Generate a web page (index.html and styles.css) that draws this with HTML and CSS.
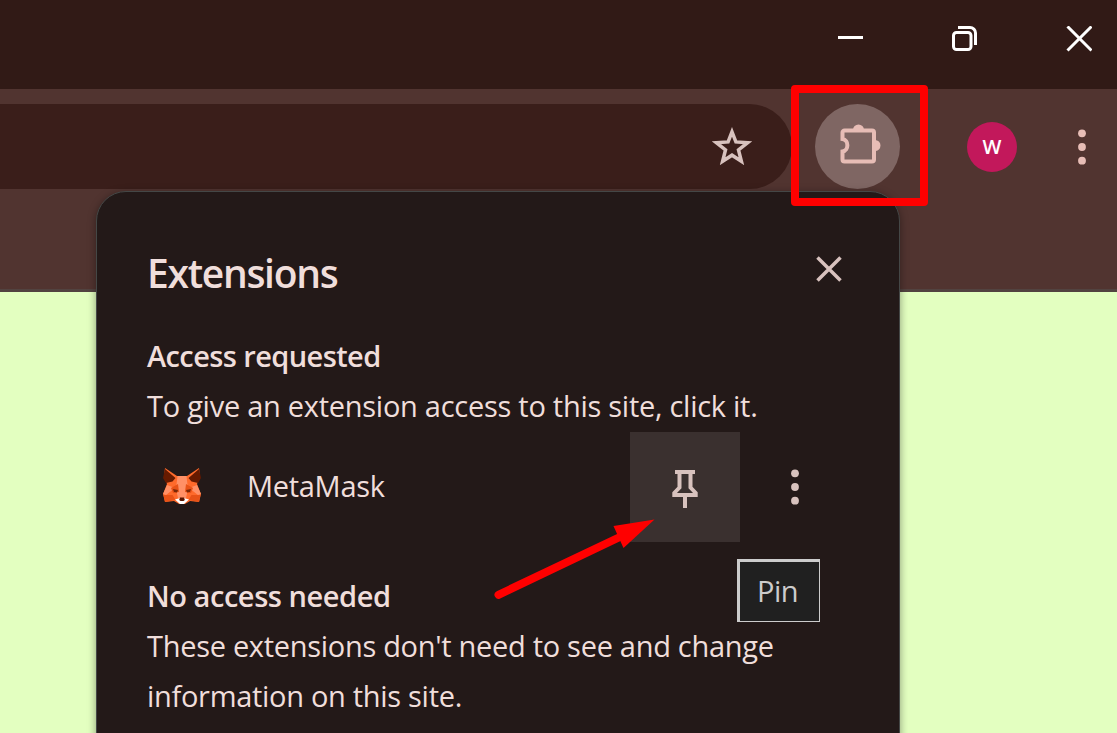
FILE: index.html
```html
<!DOCTYPE html>
<html lang="en">
<head>
<meta charset="utf-8">
<title>Extensions</title>
<link rel="stylesheet" href="styles.css">
</head>
<body>
<div class="browser">
  <header class="titlebar">
    <svg class="win-icon" viewBox="0 0 26 26"><path d="M0 11.500h25" stroke-width="3"/></svg>
    <svg class="win-icon" viewBox="0 0 26 26"><rect x="1.500" y="6.500" width="17.500" height="17" rx="3"/><path d="M6 1.500H18a5.500 5.500 0 0 1 5.500 5.500v12"/></svg>
    <svg class="win-icon" viewBox="0 0 26 26"><path d="M1.500 .500l24 24M25.500 .500L1.500 24.500"/></svg>
  </header>
  <div class="toolbar">
    <div class="omnibox">
      <svg class="star" viewBox="0 0 40 38"><path d="M20 4.800l3.900 10.100 11.800.8-9.200 7.200 2.900 11.400-9.400-6.100-9.400 6.100 2.900-11.400-9.200-7.200 11.800-.8z"/></svg>
    </div>
    <button class="puzzle" aria-label="Extensions">
      <svg viewBox="0 0 42 42"><path class="line" d="M4.500 7.500H32a2 2 0 0 1 2 2V36.500a2 2 0 0 1-2 2H4.500a2 2 0 0 1-2-2V28.500C9 27.500 9 17 2.500 16V9.500a2 2 0 0 1 2-2z"/><path class="knob" d="M13 7a5.500 5.500 0 0 1 11 0zM35 17a5.500 5.500 0 0 1 0 11z"/></svg>
    </button>
    <div class="avatar">W</div>
    <svg class="dots menu" viewBox="0 0 8 36"><circle cx="4" cy="4.300" r="3.900"/><circle cx="4" cy="18" r="3.900"/><circle cx="4" cy="31.700" r="3.900"/></svg>
  </div>
  <div class="bookmarks"></div>
  <main class="page"></main>
</div>

<section class="popup">
  <div class="popup-head">
    <h1>Extensions</h1>
    <svg class="close" viewBox="0 0 26 26"><path d="M1.500 1.500l23 23M24.500 1.500L1.500 24.500"/></svg>
  </div>
  <h2 class="requested">Access requested</h2>
  <p class="hint">To give an extension access to this site, click it.</p>
  <div class="extension">
    <svg class="fox" viewBox="0 0 40 38">
      <path fill="#ff6a2b" d="M3 0l12 8h10l12-8 1 9-3 7 4 10-2 8-9-1-5 3h-6l-5-3-9 1-2-8 4-10-3-7z"/>
      <path fill="#ff9066" d="M15.500 8h9l1.500 13-2 9h-8l-2-9zM5 17l8 3-9 7-3-1zM35 17l-8 3 9 7 3-1z"/>
      <path fill="#e85217" d="M1.500 27h9l3 5-10.500 2zM38.500 27h-9l-3 5 10.500 2zM9 20l7-4 1 8-6 1zM31 20l-7-4-1 8 6 1z"/>
      <path fill="#661a00" d="M3 1l10.500 9-3 3.500L4 15l-3-5zM37 1L26.500 10l3 3.500L36 15l3-5z"/>
      <path fill="#7a2606" d="M11 21l5 1-1 2.500-3-.5zM29 21l-5 1 1 2.500 3-.5z"/>
      <path fill="#fff" d="M13 31.500l5-1.500h4l5 1.500-5 4.500h-4z"/>
      <path fill="#5a1500" d="M18 29.500h4l.8 2.500-1.300 1h-3l-1.300-1z"/>
    </svg>
    <span class="name">MetaMask</span>
    <button class="pin" aria-label="Pin">
      <svg viewBox="0 0 28 42"><path d="M4 4h20M8.500 4v15.500L3.300 25v2h21.400v-2l-5.200-5.500V4M14 27v13"/></svg>
    </button>
    <svg class="dots more" viewBox="0 0 8 36"><circle cx="4" cy="4.300" r="3.900"/><circle cx="4" cy="18" r="3.900"/><circle cx="4" cy="31.700" r="3.900"/></svg>
  </div>
  <h2 class="needed">No access needed</h2>
  <p class="need-text">These extensions don't need to see and change</p>
  <p class="need-text">information on this site.</p>
</section>

<div class="tooltip">Pin</div>
<div class="highlight"></div>
<svg class="arrow" viewBox="0 0 180 105"><path class="shaft" d="M13.500 89.800L137 31"/><path class="tip" d="M169.500 14.500L128.500 21l4.500 10 5.500 12z"/></svg>
</body>
</html>
```
FILE: styles.css
```css
* { box-sizing: border-box; }
body {
  margin: 0;
  width: 1117px;
  height: 733px;
  overflow: hidden;
  font-family: "Open Sans", "Noto Sans", sans-serif;
  color: #f0dedb;
}
svg { display: block; flex: none; }
button { border: 0; padding: 0; }
h1, h2, p { margin: 0; white-space: nowrap; }

.browser { display: flex; flex-direction: column; height: 733px; }
.titlebar {
  height: 89px;
  background: #311a16;
  display: flex;
  justify-content: flex-end;
  gap: 88px;
  padding: 26px 25px 0 0;
}
.win-icon { width: 26px; height: 26px; fill: none; stroke: #fff; stroke-width: 3; }
.toolbar {
  height: 100px;
  background: #513430;
  display: flex;
  align-items: center;
  padding-top: 15px;
}
.omnibox {
  width: 792px;
  height: 85px;
  background: #3a1e1a;
  border-radius: 0 43px 43px 0;
  display: flex;
  align-items: center;
  justify-content: flex-end;
  padding: 0 40px 2px 0;
}
.star { width: 40px; height: 38px; fill: none; stroke: #d8c2be; stroke-width: 3.500; }
.puzzle {
  width: 85px;
  height: 85px;
  margin-left: 23px;
  border-radius: 50%;
  background: #7f6663;
  display: grid;
  place-items: center;
}
.puzzle svg { width: 42px; height: 42px; margin-left: 7px; margin-top: -6px; }
.puzzle .line { fill: none; stroke: #e7bdb6; stroke-width: 4; }
.puzzle .knob { fill: #e7bdb6; }
.avatar {
  width: 50px;
  height: 50px;
  margin-left: 67px;
  border-radius: 50%;
  background: #c2185b;
  color: #fff;
  font: 600 20px/50px "Open Sans", sans-serif;
  text-align: center;
}
.dots { width: 8px; height: 36px; }
.menu { margin-left: 61px; fill: #e7bdb6; }
.bookmarks { height: 103px; background: #513430; border-bottom: 3px solid #524340; }
.page { flex: 1; background: #e3ffc0; }

.popup {
  position: absolute;
  left: 96px;
  top: 191px;
  width: 804px;
  height: 560px;
  background: #231918;
  border: 1px solid #444746;
  border-radius: 30px 30px 0 0;
  padding: 49px 0 0 50px;
  box-shadow: 0 2px 8px rgba(0, 0, 0, .4);
}
.popup-head { height: 90px; display: flex; justify-content: space-between; padding-right: 57px; }
h1 { font-size: 39px; line-height: 64px; font-weight: 600; letter-spacing: -1.300px; }
.close { width: 26px; height: 26px; margin-top: 15px; fill: none; stroke: #d8c2be; stroke-width: 3.500; }
h2, p { font-size: 29px; line-height: 50px; }
h2 { font-weight: 600; }
.requested { letter-spacing: -.600px; }
.hint { letter-spacing: -.270px; }
.extension { height: 110px; margin-top: 1px; display: flex; align-items: center; }
.fox { width: 40px; height: 38px; margin-left: 15px; }
.name { width: 383px; margin-left: 45px; font-size: 29px; letter-spacing: -.300px; padding-bottom: 3px; }
.pin { width: 110px; height: 110px; background: #3a302f; display: grid; place-items: center; }
.pin svg { width: 28px; height: 42px; fill: none; stroke: #d8c2be; stroke-width: 4; margin-top: 3px; }
.more { margin-left: 51px; fill: #d8c2be; }
.needed { margin-top: 29px; letter-spacing: -.450px; }
.need-text { letter-spacing: -.300px; }

.tooltip {
  position: absolute;
  left: 737px;
  top: 559px;
  width: 83px;
  height: 63px;
  border: 1px solid #ccc;
  border-top-width: 3px;
  border-left-width: 3px;
  background: #202020;
  color: #ccc;
  font-size: 29px;
  line-height: 58px;
  letter-spacing: -.500px;
  padding-left: 17px;
}
.highlight {
  position: absolute;
  left: 791px;
  top: 85px;
  width: 137px;
  height: 121px;
  border: 8px solid #f00;
  border-radius: 4px;
}
.arrow { position: absolute; left: 485px; top: 505px; width: 180px; height: 105px; }
.shaft { stroke: #f00; stroke-width: 8; stroke-linecap: round; }
.tip { fill: #f00; }
```
